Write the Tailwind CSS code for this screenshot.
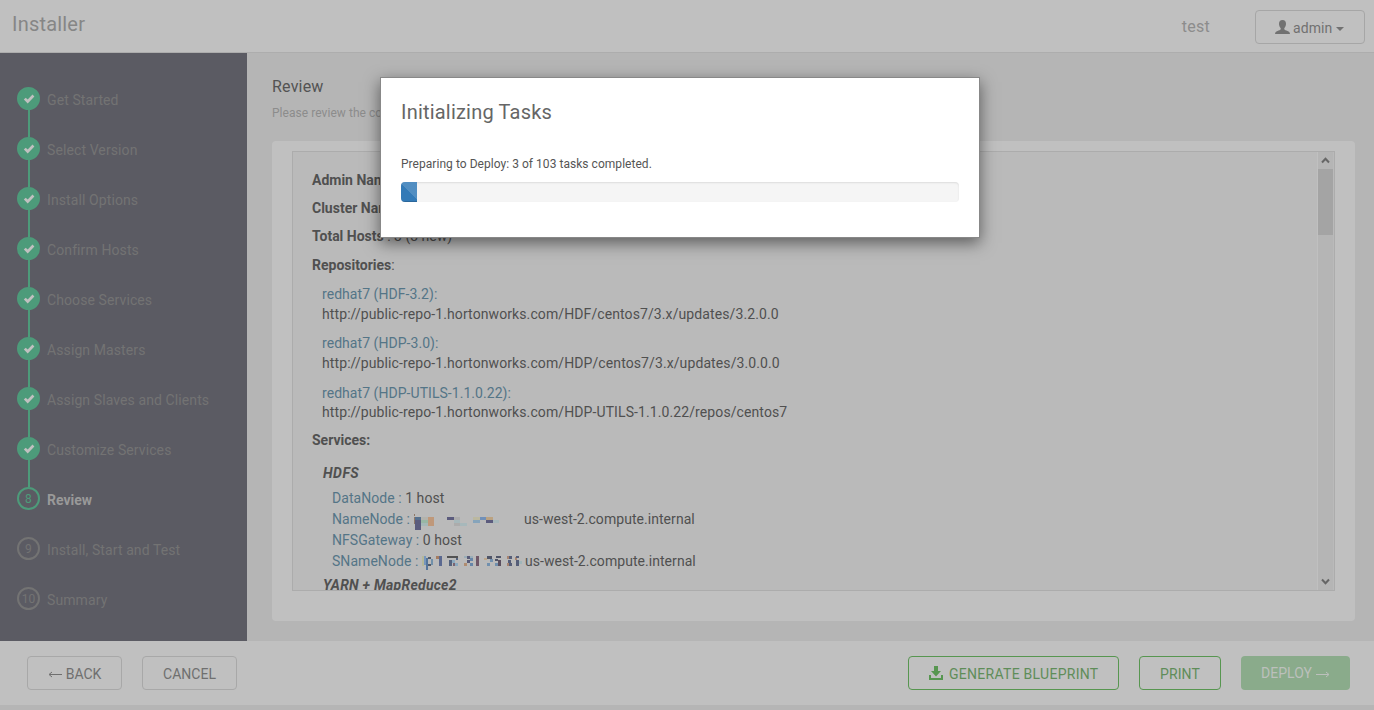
<!DOCTYPE html>
<html lang="en">
<head>
<meta charset="utf-8">
<title>Installer</title>
<script src="https://cdn.jsdelivr.net/npm/@tailwindcss/browser@4"></script>
</head>
<body class="relative h-[710px] w-[1374px] overflow-hidden bg-[#b5b5b5] font-[Roboto,sans-serif] text-[14px] leading-5 text-[#505050]">
<svg class="hidden">
  <symbol id="check" viewBox="0 0 12 12"><path d="M.8 6.500 2.700 4.700 4.700 6.600 9.500 1.500 11.400 3.400 4.700 10.400Z" fill="#c0c0c0"/></symbol>
</svg>
<header class="flex h-[53px] items-start border-b border-[#adadad] bg-[#c0c0c0]">
  <h1 class="ml-3 mt-[10px] text-[20px] leading-7 tracking-[0.2px] text-[#868686]">Installer</h1>
  <span class="ml-auto mr-[45px] mt-[17px] text-[16px] tracking-[0.25px] text-[#8c8c8c]">test</span>
  <button class="mr-[9px] mt-[10px] flex h-[34px] w-[110px] items-center rounded border border-[#a6a6a6] pl-[19px] text-[#717171]">
    <svg class="h-[14px] w-[15px]" viewBox="0 0 15 14" fill="#717171"><path d="M7.500 0C9.800 0 11 1.600 11 3.800c0 1.900-.7 3.500-1.700 4.400v1c.4.800 1.700 1.200 3.200 1.700 1.600.5 2.300 1.300 2.500 3.100H0c.2-1.800.9-2.600 2.500-3.100 1.500-.5 2.800-.9 3.200-1.700v-1C4.700 7.300 4 5.700 4 3.800 4 1.600 5.200 0 7.500 0Z"/></svg>
    <span class="ml-[3px] mt-[2px] tracking-[0.1px]">admin</span>
    <svg class="ml-1 mt-[3px] h-1 w-2" viewBox="0 0 8 4"><path d="M0 0h8L4 4Z" fill="#717171"/></svg>
  </button>
</header>
<div class="flex h-[588px]">
  <nav class="w-[247px] bg-[#5b5b63] pl-[17px] pt-[34px] text-[14px] tracking-[0.1px] text-[#737373]">
    <ul id="steps"></ul>
  </nav>
  <main class="flex-1 pl-[25px] pt-[24px]">
    <h2 class="text-[16px] leading-5 tracking-[0.2px] text-[#535353]">Review</h2>
    <p class="mt-[6px] text-[12px] leading-5 tracking-[0.05px] text-[#8c8c8c]">Please review the configuration</p>
    <section class="mt-[18px] h-[480px] w-[1083px] rounded bg-[#c0c0c0] px-5 pt-[10px]">
      <div class="flex h-[440px] w-[1043px] overflow-hidden border border-[#acacac] bg-[#bababa]">
        <div class="h-[438px] flex-1 overflow-hidden whitespace-nowrap pl-[19px] pt-[18px]">
          <p><b>Admin Name</b> : admin</p>
          <p class="mt-2"><b>Cluster Name</b> : test</p>
          <p class="mt-2"><b>Total Hosts</b> : 3 (3 new)</p>
          <p class="mt-[9px]"><b>Repositories</b>:</p>
          <div class="ml-[10px] tracking-[0.1px]">
            <p class="mt-[9px] tracking-[0.05px] text-[#547587]">redhat7 (HDF-3.2):</p>
            <p>http://public-repo-1.hortonworks.com/HDF/centos7/3.x/updates/3.2.0.0</p>
            <p class="mt-[9px] tracking-[0.05px] text-[#547587]">redhat7 (HDP-3.0):</p>
            <p>http://public-repo-1.hortonworks.com/HDP/centos7/3.x/updates/3.0.0.0</p>
            <p class="mt-[10px] tracking-[0.05px] text-[#547587]">redhat7 (HDP-UTILS-1.1.0.22):</p>
            <p class="mt-[-1px]">http://public-repo-1.hortonworks.com/HDP-UTILS-1.1.0.22/repos/centos7</p>
          </div>
          <p class="mt-2"><b>Services:</b></p>
          <p class="ml-[11px] mt-[13px] tracking-[0.5px]"><b><i>HDFS</i></b></p>
          <div class="ml-5 mt-[5px] leading-[21px] tracking-[0.05px]">
            <p><span class="text-[#547587]">DataNode :</span> 1 host</p>
            <p class="flex"><span class="w-[81px] text-[#547587]">NameNode :</span><svg class="h-[21px] w-[111px]" viewBox="413 508 111 21" shape-rendering="crispEdges"><g transform="translate(0 -1)"><path fill="#8f7867" d="M414 514h1v2h-1z"/><path fill="#8f7867" d="M414 517h1v7h-1z"/><path fill="#55708f" d="M415 517h6v3h-6z"/><path fill="#5b5b7d" d="M415 520h6v11h-6z"/><path fill="#b3b3ad" d="M421 517h7v3h-7z"/><path fill="#98b7a5" d="M421 520h7v3h-7z"/><path fill="#a5b8b8" d="M421 523h7v3h-7z"/><path fill="#bf987a" d="M428 517h6v9h-6z"/><path fill="#5b5b7d" d="M447 517h7v3h-7zM486 520h7v3h-7z"/><path fill="#acacac" d="M454 517h6v3h-6zM454 523h6v3h-6z"/><path fill="#a7b8bb" d="M454 520h6v3h-6zM460 523h7v3h-7zM493 520h6v3h-6z"/><path fill="#bbb8a0" d="M473 517h7v3h-7z"/><path fill="#86a4bb" d="M473 520h7v3h-7z"/><path fill="#7190b8" d="M480 517h6v3h-6z"/><path fill="#bba281" d="M486 517h7v3h-7z"/></g></svg><span>us-west-2.compute.internal</span></p>
            <p><span class="text-[#547587]">NFSGateway :</span> 0 host</p>
            <p class="flex"><span class="w-[89px] text-[#547587]">SNameNode :</span><svg class="h-[21px] w-[104px]" viewBox="421 550 104 21" shape-rendering="crispEdges"><path fill="#b6b899" d="M422 555h2v10h-2z"/><path fill="#7796bd" d="M424 555h2v9h-2z"/><path fill="#55759c" d="M426 557h2v12h-2z"/><path fill="#525967" d="M428 556h3v2h-3zM428 563h3v2h-3z"/><path fill="#7090aa" d="M431 558h2v6h-2z"/><path fill="#a57c60" d="M436 555h3v3h-3z"/><path fill="#5b6990" d="M439 555h3v10h-3z"/><path fill="#525252" d="M447 555h5v2h-5zM452 555h6v2h-6z"/><path fill="#55637e" d="M449 559h3v6h-3zM456 557h2v2h-2z"/><path fill="#8baabf" d="M452 559h3v3h-3zM455 562h3v3h-3z"/><path fill="#7b6470" d="M453 562h2v3h-2z"/><path fill="#585b78" d="M467 555h3v3h-3zM467 559h3v3h-3z"/><path fill="#b08c70" d="M464 562h3v3h-3z"/><path fill="#9baeb8" d="M464 555h3v2h-3zM470 555h3v2h-3z"/><path fill="#6685a8" d="M470 557h3v3h-3zM470 562h3v3h-3z"/><path fill="#705868" d="M476 555h3v10h-3z"/><path fill="#bda78c" d="M484 557h3v2h-3z"/><path fill="#505568" d="M487 555h5v3h-5zM496 555h5v2h-5zM495 558h3v2h-3z"/><path fill="#7190ae" d="M490 558h3v3h-3zM487 562h3v3h-3zM495 562h3v3h-3z"/><path fill="#5b4f5f" d="M498 559h3v6h-3z"/><path fill="#a88470" d="M507 555h2v3h-2zM507 562h2v3h-2zM515 556h2v3h-2z"/><path fill="#555d78" d="M509 555h3v3h-3zM508 559h3v3h-3zM509 562h3v3h-3zM516 555h3v2h-3zM516 559h3v6h-3z"/><path fill="#9fb6ba" d="M519 560h3v3h-3z"/></svg><span>us-west-2.compute.internal</span></p>
          </div>
          <p class="ml-[11px] mt-[3px] tracking-[0.25px]"><b><i>YARN + MapReduce2</i></b></p>
        </div>
        <div class="mr-px flex w-4 flex-col items-center border-l border-[#c0c0c0] bg-[#b5b5b5]">
          <svg class="my-[5px] h-[7px] w-[9px]" viewBox="0 0 9 7"><path d="m1 5.500 3.500-3.700L8 5.500" fill="none" stroke="#666" stroke-width="2"/></svg>
          <div class="h-[66px] w-full bg-[#a4a4a4]"></div>
          <svg class="mb-[5px] mt-auto h-[7px] w-[9px]" viewBox="0 0 9 7"><path d="m1 1.500 3.500 3.700L8 1.500" fill="none" stroke="#666" stroke-width="2"/></svg>
        </div>
      </div>
    </section>
  </main>
</div>
<footer class="flex h-16 bg-[#c0c0c0] pt-[15px] text-[14px] text-[#6f6f6f]">
  <button class="ml-[27px] h-[34px] w-[95px] rounded border border-[#a8a8a8] pt-[2px]"><span class="inline-flex items-center gap-1"><svg class="mt-[2px] h-[9px] w-[14px]" viewBox="0 0 14 9"><path d="M14 4.500H1.500M4 2 1 4.500 4 7" fill="none" stroke="#6f6f6f"/></svg>BACK</span></button>
  <button class="ml-5 h-[34px] w-[95px] rounded border border-[#a8a8a8] pt-[2px]">CANCEL</button>
  <button class="ml-auto flex h-[34px] w-[211px] items-center whitespace-nowrap rounded border border-[#579650] pl-5 pt-[2px] tracking-[0.28px] text-[#5f8d59]">
    <svg class="mb-[2px] mr-[6px] h-[14px] w-[14px] shrink-0" viewBox="0 0 14 14" fill="#579650"><path d="M5 0h4v5h3L7 10.500 2 5h3ZM0 9h2v3h10V9h2v5H0Z"/></svg>GENERATE BLUEPRINT</button>
  <button class="ml-5 h-[34px] w-[82px] rounded border border-[#579650] pt-[2px] tracking-[0.1px] text-[#5f8d59]">PRINT</button>
  <button class="ml-5 mr-6 h-[34px] w-[109px] rounded bg-[#8aab8b] text-[#bcc0bc]"><span class="inline-flex items-center gap-1">DEPLOY<svg class="mt-[2px] h-[9px] w-[14px]" viewBox="0 0 14 9"><path d="M0 4.500h12.500M10 2l3 2.500L10 7" fill="none" stroke="#bcc0bc"/></svg></span></button>
</footer>
<div role="dialog" class="absolute left-[380px] top-[77px] h-[161px] w-[600px] border border-[#888] bg-white px-5 pt-[22px] text-[#666] shadow-[0_5px_15px_rgba(0,0,0,0.5)]">
  <h3 class="text-[20px] leading-6 tracking-[0.2px] text-[#666]">Initializing Tasks</h3>
  <p class="mt-[30px] text-[12px] leading-5 tracking-[0.04px] text-[#555]">Preparing to Deploy: 3 of 103 tasks completed.</p>
  <div class="mt-2 h-5 overflow-hidden rounded bg-[#f5f5f5] shadow-[inset_0_1px_2px_rgba(0,0,0,0.1)]">
    <div class="h-5 w-4 bg-[#337ab7] bg-[linear-gradient(45deg,transparent_50%,rgba(255,255,255,0.15)_50%)] shadow-[inset_0_-1px_0_rgba(0,0,0,0.15)]"></div>
  </div>
</div>
<script>
const names = ['Get Started','Select Version','Install Options','Confirm Hosts','Choose Services','Assign Masters','Assign Slaves and Clients','Customize Services','Review','Install, Start and Test','Summary'];
document.getElementById('steps').innerHTML = names.map((n, i) => {
  const done = i < 8, now = i === 8;
  const ring = done ? 'border-[#4d9b7a] bg-[#4d9b7a]' : now ? 'border-[#4d9b7a] text-[#4d9b7a]' : 'border-[#737373]';
  return `<li class="flex h-[50px]">
    <div class="flex w-[23px] flex-col items-start">
      <span class="flex h-[23px] w-[23px] shrink-0 items-center justify-center rounded-full border-2 text-[12px] leading-none ${ring}">${done ? '<svg class="h-3 w-3 shrink-0"><use href="#check"/></svg>' : i}</span>
      ${done ? '<span class="ml-[11px] w-[2px] flex-1 bg-[#4d9b7a]"></span>' : ''}
    </div>
    <span class="ml-[7px] mt-[3px] ${now ? 'font-bold tracking-normal text-[#999]' : ''}">${n}</span>
  </li>`;
}).join('');
</script>
</body>
</html>
